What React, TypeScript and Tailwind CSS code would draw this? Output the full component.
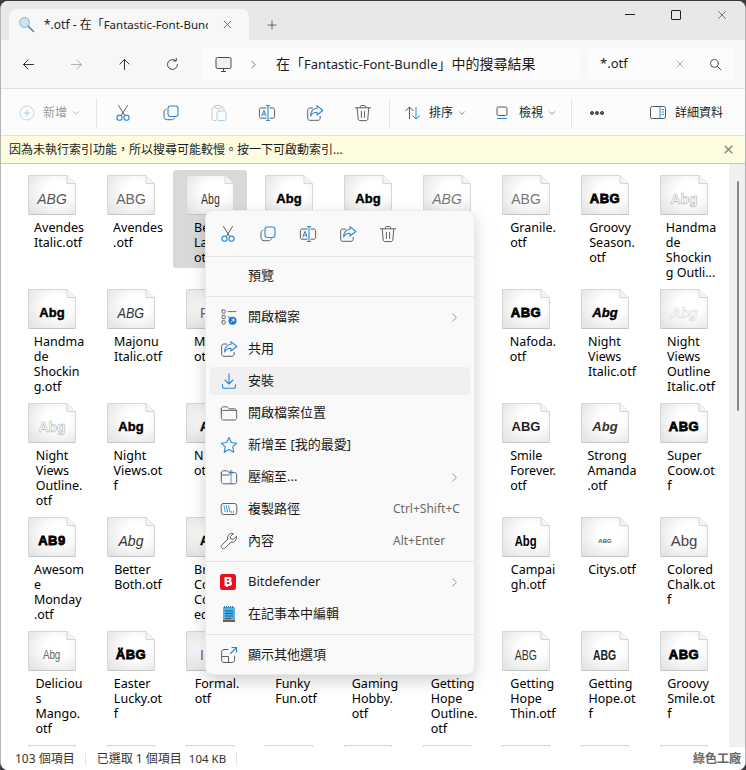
import type { ReactNode } from "react";
import { ChevronDown, ChevronRight, Plus, X } from "lucide-react";

const ui = "font-['Noto_Sans','Noto_Sans_CJK_TC',sans-serif]";

type FileItem = {
  sample?: string;
  sampleClass?: string;
  clipped?: boolean; // sample sits at the icon's left, the rest is under the menu
  lines?: string[];
  nameClass?: string;
  selected?: boolean;
};

const base = "font-['Liberation_Sans',sans-serif]";
const heavy = `${base} font-bold text-[13px] text-black [-webkit-text-stroke:0.4px_black]`;
const black = `${base} font-bold text-[13px] text-black tracking-[0.5px] [-webkit-text-stroke:0.8px_black]`;
const italicThin = `${base} italic text-[14px] text-[#555]`;
const italicLight = `${base} italic text-[14px] text-[#777]`;
const thin = `${base} text-[14px] text-[#666]`;
const ghost = `${base} font-bold text-[14px] text-white [-webkit-text-stroke:0.6px_#b5b5b5]`;
const ghostItalic = `${base} font-bold italic text-[14px] text-white [-webkit-text-stroke:0.5px_#cfcfcf]`;
const narrow = `${base} text-[14px] text-[#333] scale-x-75`;
const narrowBold = `${base} font-bold text-[14px] text-[#222] scale-x-75`;

const cut = "ml-[21px]";

const files: FileItem[] = [
  { sample: "ABG", sampleClass: italicThin, lines: ["Avendes", "Italic.otf"] },
  { sample: "ABG", sampleClass: thin, lines: ["Avendes", ".otf"] },
  { sample: "Abg", sampleClass: narrow, lines: ["Be", "La", "ot"], nameClass: cut, selected: true },
  { sample: "Abg", sampleClass: heavy },
  { sample: "Abg", sampleClass: heavy },
  { sample: "ABG", sampleClass: italicLight },
  { sample: "ABG", sampleClass: `${base} text-[14px] text-[#777]`, lines: ["Granile.", "otf"] },
  { sample: "ABG", sampleClass: black, lines: ["Groovy", "Season.", "otf"] },
  { sample: "Abg", sampleClass: ghost, lines: ["Handma", "de", "Shockin", "g Outli..."] },

  { sample: "Abg", sampleClass: heavy, lines: ["Handma", "de", "Shockin", "g.otf"] },
  { sample: "ABG", sampleClass: `${base} italic text-[14px] text-[#333] scale-x-90`, lines: ["Majonu", "Italic.otf"] },
  { sample: "P", sampleClass: thin, clipped: true, lines: ["M", "ot"], nameClass: cut },
  {},
  {},
  {},
  { sample: "ABG", sampleClass: black, lines: ["Nafoda.", "otf"] },
  { sample: "Abg", sampleClass: `${base} font-bold italic text-[13px] text-black [-webkit-text-stroke:0.4px_black]`, lines: ["Night", "Views", "Italic.otf"] },
  { sample: "Abg", sampleClass: ghostItalic, lines: ["Night", "Views", "Outline", "Italic.otf"] },

  { sample: "Abg", sampleClass: ghost, lines: ["Night", "Views", "Outline.", "otf"] },
  { sample: "Abg", sampleClass: heavy, lines: ["Night", "Views.ot", "f"] },
  { sample: "A", sampleClass: heavy, clipped: true, lines: ["N", "ot"], nameClass: cut },
  {},
  {},
  {},
  { sample: "ABG", sampleClass: `${base} font-bold text-[13px] text-[#222]`, lines: ["Smile", "Forever.", "otf"] },
  { sample: "Abg", sampleClass: `${base} font-bold italic text-[13px] text-[#333]`, lines: ["Strong", "Amanda", ".otf"] },
  { sample: "ABG", sampleClass: black, lines: ["Super", "Coow.ot", "f"] },

  { sample: "AB9", sampleClass: black, lines: ["Awesom", "e", "Monday", ".otf"] },
  { sample: "Abg", sampleClass: `${base} italic text-[14px] text-[#333]`, lines: ["Better", "Both.otf"] },
  { sample: "A", sampleClass: heavy, clipped: true, lines: ["Br", "Co", "Co", "ed"], nameClass: cut },
  {},
  {},
  {},
  { sample: "Abg", sampleClass: `${base} font-bold text-[15px] text-black scale-x-75`, lines: ["Campai", "gh.otf"] },
  { sample: "ABG", sampleClass: `${base} font-bold text-[6px] text-[#555]`, lines: ["Citys.otf"] },
  { sample: "Abg", sampleClass: `${base} text-[15px] text-[#444]`, lines: ["Colored", "Chalk.ot", "f"] },

  { sample: "Abg", sampleClass: `${base} text-[13px] text-[#666] scale-x-75`, lines: ["Deliciou", "s", "Mango.", "otf"] },
  { sample: "ÄBG", sampleClass: black, lines: ["Easter", "Lucky.ot", "f"] },
  { sample: "I", sampleClass: thin, clipped: true, lines: ["Formal.", "otf"] },
  { lines: ["Funky", "Fun.otf"] },
  { lines: ["Gaming", "Hobby.", "otf"] },
  { lines: ["Getting", "Hope", "Outline.", "otf"] },
  { sample: "ABG", sampleClass: narrow, lines: ["Getting", "Hope", "Thin.otf"] },
  { sample: "ABG", sampleClass: narrowBold, lines: ["Getting", "Hope.ot", "f"] },
  { sample: "ABG", sampleClass: black, lines: ["Groovy", "Smile.ot", "f"] },
];

function PageShape() {
  return (
    <svg width="48" height="40" viewBox="0 0 48 40" className="absolute inset-0">
      <defs>
        <radialGradient id="page" cx="62%" cy="42%" r="75%">
          <stop offset="35%" stopColor="#ffffff" />
          <stop offset="100%" stopColor="#e4e4e4" />
        </radialGradient>
      </defs>
      <path d="M.5.5H39L47.5 8.500V39.500H.5Z" fill="url(#page)" stroke="#d6d6d6" />
      <path d="M39 .5V8.500H47.500" fill="#f4f4f4" stroke="#d6d6d6" />
      <path d="M1 39.500H47" stroke="#c4c4c4" />
    </svg>
  );
}

function FontFile({ item }: { item: FileItem }) {
  return (
    <div className={`rounded-[3px] pt-[5px] ${item.selected ? "h-[98px] bg-[#d9d9d9]" : "h-[114px]"}`}>
      <div className="relative mx-auto h-[40px] w-[48px]">
        <PageShape />
        {item.sample && (
          <div className={`relative flex h-full items-center pt-[7px] ${item.clipped ? "pl-[14px]" : "justify-center"}`}>
            <span className={`inline-block leading-none ${item.sampleClass}`}>{item.sample}</span>
          </div>
        )}
      </div>
      {item.lines && (
        <div className={`mt-[5px] w-fit text-[12.5px] leading-[15px] text-black ${item.nameClass ?? "mx-auto pl-[14px]"}`}>
          {item.lines.map((line, i) => (
            <div key={i} className="whitespace-nowrap">{line}</div>
          ))}
        </div>
      )}
    </div>
  );
}

const Svg = ({ children, size = 18, className = "" }: { children: ReactNode; size?: number; className?: string }) => (
  <svg width={size} height={size} viewBox="0 0 18 18" fill="none" strokeLinecap="round" strokeLinejoin="round" className={`shrink-0 ${className}`}>
    {children}
  </svg>
);

const gray = "#5f5f5f";
const blue = "#2b88d8";

const CutIcon = () => (
  <Svg>
    <path d="M4.500 1.500 10.400 11M13.500 1.500 7.600 11" stroke={gray} strokeWidth="1" />
    <circle cx="5.500" cy="13.700" r="2.600" stroke={blue} strokeWidth="1.100" />
    <circle cx="12.500" cy="13.700" r="2.600" stroke={blue} strokeWidth="1.100" />
  </Svg>
);
const CopyIcon = () => (
  <Svg>
    <rect x="6" y="2" width="10" height="10.500" rx="2.400" stroke={blue} strokeWidth="1.100" />
    <path d="M4 5.200c-1 .3-2 1.100-2 2.600v4.500c0 2 1.400 3.400 3.400 3.400h4.300c1.300 0 2.200-.7 2.600-1.800" stroke={gray} strokeWidth="1" />
  </Svg>
);
const PasteIcon = () => (
  <Svg>
    <path d="M5 3H3.600C2.700 3 2 3.700 2 4.600v10.200c0 .9.700 1.600 1.600 1.600H6" stroke="#c8c8c8" strokeWidth="1" />
    <path d="M11 3h1.600c.9 0 1.400.5 1.400 1.400V6" stroke="#c8c8c8" strokeWidth="1" />
    <rect x="5" y="1.500" width="6" height="3" rx="1" stroke="#c8c8c8" strokeWidth="1" />
    <rect x="7" y="7" width="9" height="9.500" rx="1.600" stroke="#a9d1ef" strokeWidth="1" />
  </Svg>
);
const RenameIcon = () => (
  <Svg>
    <path d="M8 4H3c-1 0-1.600.7-1.600 1.600v7c0 1 .7 1.600 1.600 1.600h5M12 4h3c1 0 1.600.7 1.600 1.600v7c0 1-.7 1.600-1.600 1.600h-3" stroke={gray} strokeWidth="1" />
    <path d="M10 1.500v15M8.400 1.500h3.200M8.400 16.500h3.200" stroke={blue} strokeWidth="1.100" />
    <path d="M3.800 12 6 6.300 8 12M4.500 10.200h3" stroke={blue} strokeWidth="1" />
  </Svg>
);
const ShareIcon = () => (
  <Svg>
    <path d="M6.500 4H3.800C2.600 4 1.700 4.900 1.700 6v8.300c0 1.100.9 2 2.100 2h8.300c1.200 0 2.100-.9 2.100-2v-2" stroke={gray} strokeWidth="1" />
    <path d="M11 1.600 16.800 6.500 11 11V8.300C8 8.300 6 9.400 4.600 12c.2-4.600 2.600-7.400 6.400-7.700Z" stroke={blue} strokeWidth="1.100" />
  </Svg>
);
const TrashIcon = () => (
  <Svg>
    <path d="M1.500 3.800h15M6.300 3.500V2.800C6.300 2 7 1.500 7.700 1.500h2.600c.7 0 1.400.5 1.400 1.300v.7M3.200 4l1 11c.1 1 .9 1.600 1.700 1.600h6.200c.9 0 1.600-.7 1.700-1.600l1-11M7.400 7.300v6.200M10.600 7.300v6.200" stroke={gray} strokeWidth="1" />
  </Svg>
);
const OpenWithIcon = () => (
  <Svg>
    <rect x="2" y="2" width="3.200" height="3.200" rx=".6" stroke={gray} strokeWidth=".9" />
    <rect x="2" y="7.400" width="3.200" height="3.200" rx=".6" stroke={gray} strokeWidth=".9" />
    <rect x="2" y="12.800" width="3.200" height="3.200" rx=".6" stroke={gray} strokeWidth=".9" />
    <path d="M8 3.600h8M8 9h1.500" stroke={gray} strokeWidth=".9" />
    <circle cx="12.500" cy="12.700" r="4" fill="#0f78d4" />
    <path d="M11 14.200 14 11.300M12 11.200h2v2" stroke="white" strokeWidth=".9" />
  </Svg>
);
const InstallIcon = () => (
  <Svg>
    <path d="M9 1.800v10M5 8l4 4 4-4" stroke={blue} strokeWidth="1.100" />
    <path d="M2.500 12.500v1.700c0 1.300 1 2.100 2.100 2.100h8.800c1.100 0 2.100-.8 2.100-2.100v-1.700" stroke={blue} strokeWidth="1.100" />
  </Svg>
);
const FolderIcon = () => (
  <Svg>
    <path d="M1.300 5c0-1.200.9-2.200 2.200-2.200h3c.6 0 1 .2 1.400.6l1.300 1.400h5.400c1.200 0 2.100 1 2.100 2.200v6.800c0 1.200-.9 2.200-2.100 2.200H3.500c-1.300 0-2.200-1-2.200-2.200V5Z" stroke={gray} strokeWidth="1" />
    <path d="M1.300 8.300c0-1 .8-1.900 1.900-1.900h12.500" stroke={gray} strokeWidth="1" />
  </Svg>
);
const StarIcon = () => (
  <Svg>
    <path d="M9 1.500 11.300 6.500l5.400.7-4 3.700 1.100 5.400L9 13.600l-4.800 2.700 1.100-5.400-4-3.700 5.400-.7L9 1.500Z" stroke={blue} strokeWidth="1.100" />
  </Svg>
);
const ZipIcon = () => (
  <Svg>
    <path d="M1.300 5c0-1.200.9-2.200 2.200-2.200h3c.6 0 1 .2 1.400.6l1.300 1.200h5.400c1.200 0 2.100 1 2.100 2.200v6.800c0 1.200-.9 2.200-2.100 2.200H3.500c-1.300 0-2.200-1-2.200-2.200V5Z" stroke={gray} strokeWidth="1" />
    <path d="M1.500 7h7.500" stroke={gray} strokeWidth="1" />
    <path d="M11 6v10" stroke={blue} strokeWidth="1" strokeDasharray="1.500 1.200" />
    <rect x="9.800" y="3" width="2.400" height="3.200" rx=".8" stroke={blue} strokeWidth=".9" />
  </Svg>
);
const PathIcon = () => (
  <Svg>
    <rect x="1.200" y="3.500" width="15.600" height="11" rx="2.200" stroke={gray} strokeWidth="1" />
    <path d="M4 5.800l1.300 6M6.300 5.800l1.300 6M8.600 5.800l1.300 6" stroke={blue} strokeWidth=".9" />
    <path d="M11.500 12h.01M13.500 12h.01" stroke={gray} strokeWidth="1.300" />
  </Svg>
);
const WrenchIcon = () => (
  <Svg>
    <path d="M16.400 4.500 13.200 7.400l-2.400-.5-.6-2.300L13.400 1.700c-2.400-.9-5.200.6-5.700 3.100-.2.800-.1 1.600.1 2.300L1.900 13c-.9.900-.9 2.200 0 3.100.9.900 2.200.9 3.100 0l6-6c3 .8 6.200-1.900 5.400-5.600Z" stroke={gray} strokeWidth="1" />
  </Svg>
);
const BitdefenderIcon = () => (
  <svg width="16" height="16" viewBox="0 0 16 16" className="shrink-0">
    <rect width="16" height="16" rx="2.500" fill="#ee0c1e" />
    <path d="M4.500 3h5c1.300 0 2.100.8 2.100 2 0 .9-.3 1.500-1 1.900.9.300 1.400 1 1.400 2.100 0 1.700-1 3-2.500 3H8v1H6v-1H4.500V3Zm2.400 2.100v1.400h1.700c.4 0 .6-.3.6-.7s-.2-.7-.6-.7H6.900Zm0 3.200v1.700h1.900c.5 0 .7-.4.7-.9s-.2-.8-.7-.8H6.900Z" fill="white" fillRule="evenodd" />
  </svg>
);
const NotepadIcon = () => (
  <svg width="18" height="18" viewBox="0 0 18 18" className="shrink-0">
    <rect x="3" y="2" width="12" height="15" rx=".8" fill="#4fb3e8" />
    <rect x="3" y="15" width="12" height="2" fill="#8a5a2b" />
    <path d="M4.500 1v2M6.500 1v2M8.500 1v2M10.500 1v2M12.500 1v2" stroke="#1f6f9f" strokeWidth=".9" />
    <path d="M5 6h8M5 8.500h8M5 11h8M5 13.500h6" stroke="#155a85" strokeWidth=".9" />
  </svg>
);
const MoreOptionsIcon = () => (
  <Svg>
    <path d="M8 3.500H4c-1.400 0-2.400 1-2.400 2.400v8.200c0 1.400 1 2.400 2.400 2.400h8.200c1.400 0 2.400-1 2.400-2.400v-4" stroke={gray} strokeWidth="1" />
    <path d="M1.800 10.500h6.700v6" stroke={gray} strokeWidth="1" />
    <path d="M10.500 7.500l6-6M12 1.500h4.500V6" stroke={blue} strokeWidth="1.100" />
  </Svg>
);

function MenuRow({ icon, label, right, arrow, active }: { icon?: ReactNode; label: string; right?: string; arrow?: boolean; active?: boolean }) {
  return (
    <div className="h-[32px] px-[4px] py-[2px]">
      <div className={`flex h-[28px] items-center rounded-[4px] pl-[10px] pr-[8px] ${active ? "bg-[#f0f0f0]" : ""}`}>
        <div className="flex w-[28px] items-center">{icon}</div>
        <span className="flex-1 text-[13px] text-[#1b1b1b]">{label}</span>
        {right && <span className="mr-[2px] w-[67px] whitespace-nowrap text-[12px] text-[#6a6a6a]">{right}</span>}
        {arrow && <ChevronRight size={15} strokeWidth={1.2} className="text-[#777]" />}
      </div>
    </div>
  );
}

const Divider = () => <div className="h-px bg-[#e6e6e6]" />;

function ContextMenu() {
  return (
    <div className="absolute left-[205px] top-[210px] z-10 w-[270px] rounded-[8px] border border-[#ebebeb] bg-[#f9f9f9] shadow-[0_6px_16px_rgba(0,0,0,0.18)]">
      <div className="flex h-[45px] items-center gap-[22px] pl-[13px]">
        <CutIcon />
        <CopyIcon />
        <RenameIcon />
        <ShareIcon />
        <TrashIcon />
      </div>
      <Divider />
      <div className="pb-[4px] pt-[3px]">
        <MenuRow label="預覽" />
      </div>
      <Divider />
      <div className="py-[4px]">
        <MenuRow icon={<OpenWithIcon />} label="開啟檔案" arrow />
        <MenuRow icon={<ShareIcon />} label="共用" />
        <MenuRow icon={<InstallIcon />} label="安裝" active />
        <MenuRow icon={<FolderIcon />} label="開啟檔案位置" />
        <MenuRow icon={<StarIcon />} label="新增至 [我的最愛]" />
        <MenuRow icon={<ZipIcon />} label="壓縮至..." arrow />
        <MenuRow icon={<PathIcon />} label="複製路徑" right="Ctrl+Shift+C" />
        <MenuRow icon={<WrenchIcon />} label="內容" right="Alt+Enter" />
      </div>
      <Divider />
      <div className="py-[4px]">
        <MenuRow icon={<BitdefenderIcon />} label="Bitdefender" arrow />
        <MenuRow icon={<NotepadIcon />} label="在記事本中編輯" />
      </div>
      <Divider />
      <div className="pb-[3px] pt-[4px]">
        <MenuRow icon={<MoreOptionsIcon />} label="顯示其他選項" />
      </div>
    </div>
  );
}

function TitleBar() {
  return (
    <div className="flex h-[39px] items-end bg-[#e8e8e8] pl-[8px]">
      <div className="flex h-[31px] w-[240px] items-center rounded-t-[8px] bg-[#f7f7f7] pl-[9px] pr-[15px]">
        <svg width="17" height="17" viewBox="0 0 17 17" className="shrink-0">
          <circle cx="6.500" cy="6.500" r="5" fill="#c9e4f6" stroke="#8fb4cc" />
          <path d="M10.500 10.500 15.500 15.500" stroke="#6f7f8a" strokeWidth="1.600" strokeLinecap="round" />
        </svg>
        <span className="ml-[9px] w-[164px] overflow-hidden whitespace-nowrap text-[12px] text-[#1b1b1b]">
          *.otf - 在「<span className="text-[11.5px]">Fantastic-Font-Bundle</span>」
        </span>
        <X size={13} strokeWidth={1.2} className="ml-auto text-[#333]" />
      </div>
      <Plus size={14} strokeWidth={1.2} className="mb-[8px] ml-[16px] text-[#333]" />
      <div className="mb-[12px] ml-auto flex items-center self-stretch">
        <div className="flex w-[46px] justify-center"><div className="h-px w-[10px] bg-[#222]" /></div>
        <div className="flex w-[46px] justify-center"><div className="h-[10px] w-[10px] rounded-[1px] border border-[#222]" /></div>
        <div className="flex w-[46px] justify-center"><X size={14} strokeWidth={1} className="text-[#222]" /></div>
      </div>
    </div>
  );
}

function AddressBar() {
  const Nav = ({ d, color }: { d: string; color: string }) => (
    <div className="flex w-[48px] justify-center">
      <Svg size={15}><path d={d} stroke={color} strokeWidth="1.200" /></Svg>
    </div>
  );
  return (
    <div className="flex h-[49px] items-center border-b border-[#dfdfdf] bg-[#f7f7f7] pl-[3px]">
      <Nav d="M15 9H3M8.500 3.500 3 9l5.500 5.500" color="#333" />
      <Nav d="M3 9h12M9.500 3.500 15 9l-5.500 5.500" color="#b0b0b0" />
      <Nav d="M9 15V3M3.500 8.500 9 3l5.500 5.500" color="#333" />
      <Nav d="M15 9a6 6 0 1 1-2-4.500M13.500 1.500v3.200h-3.200" color="#444" />
      <div className="ml-[6px] flex h-[32px] w-[378px] items-center rounded-[5px] bg-[#fcfcfc] pl-[13px]">
        <svg width="17" height="17" viewBox="0 0 17 17" fill="none" className="shrink-0">
          <rect x="1" y="1.500" width="15" height="11" rx="1.600" stroke="#4a4a4a" fill="#f0f0f0" />
          <path d="M6 15.500h5M8.500 12.500v3" stroke="#4a4a4a" />
        </svg>
        <ChevronRight size={13} strokeWidth={1.3} className="ml-[15px] text-[#444]" />
        <span className="ml-[16px] whitespace-nowrap text-[14px] text-[#1b1b1b]">
          在「<span className="text-[13px]">Fantastic-Font-Bundle</span>」中的搜尋結果
        </span>
      </div>
      <div className="ml-[8px] flex h-[32px] w-[146px] items-center rounded-[5px] bg-[#fcfcfc] pl-[12px]">
        <span className="w-[74px] text-[13px] text-[#1b1b1b]">*.otf</span>
        <X size={12} strokeWidth={1} className="text-[#555]" />
        <Svg size={13} className="ml-[23px]"><circle cx="7.500" cy="7.500" r="5.500" stroke="#444" strokeWidth="1.300" /><path d="M11.500 11.500 16.500 16.500" stroke="#444" strokeWidth="1.300" /></Svg>
      </div>
    </div>
  );
}

function Toolbar() {
  const Sep = () => <div className="h-[31px] w-px bg-[#e6e6e6]" />;
  const Btn = ({ children }: { children: ReactNode }) => <div className="flex w-[48px] justify-center">{children}</div>;
  return (
    <div className="flex h-[47px] items-center border-b border-[#dfdfdf] bg-[#fcfcfc] pt-[2px] text-[12px] text-[#1b1b1b]">
      <div className="flex w-[95px] items-center pl-[18px] text-[#9a9a9a]">
        <svg width="16" height="16" viewBox="0 0 16 16" fill="none" className="shrink-0">
          <circle cx="8" cy="8" r="7" stroke="#c3d4e2" />
          <path d="M8 4.800v6.400M4.800 8h6.400" stroke="#a9cbe6" />
        </svg>
        <span className="ml-[8px]">新增</span>
        <ChevronDown size={10} className="ml-[4px] text-[#aaa]" />
      </div>
      <Sep />
      <div className="w-[2px]" />
      <Btn><CutIcon /></Btn>
      <Btn><CopyIcon /></Btn>
      <Btn><PasteIcon /></Btn>
      <Btn><RenameIcon /></Btn>
      <Btn><ShareIcon /></Btn>
      <Btn><TrashIcon /></Btn>
      <div className="w-[2px]" />
      <Sep />
      <div className="flex w-[91px] items-center pl-[14px]">
        <svg width="18" height="18" viewBox="0 0 18 18" fill="none" className="shrink-0">
          <path d="M5.500 15V3M1.500 7 5.500 3l4 4" stroke="#555" />
          <path d="M12 3v12M8.500 11.500 12 15l4-3.500" stroke="#2b88d8" />
        </svg>
        <span className="ml-[7px]">排序</span>
        <ChevronDown size={10} className="ml-[4px] text-[#777]" />
      </div>
      <div className="flex w-[90px] items-center pl-[13px]">
        <svg width="16" height="16" viewBox="0 0 16 16" fill="none" className="shrink-0">
          <rect x="3" y="2" width="10" height="8.500" rx="1.500" stroke="#555" />
          <path d="M3 13.500h10" stroke="#2b88d8" />
        </svg>
        <span className="ml-[9px]">檢視</span>
        <ChevronDown size={10} className="ml-[4px] text-[#777]" />
      </div>
      <Sep />
      <div className="flex w-[50px] justify-center gap-[3px]">
        <div className="h-[2px] w-[2px] rounded-full bg-[#333] outline outline-[0.5px] outline-[#333]" />
        <div className="h-[2px] w-[2px] rounded-full bg-[#333] outline outline-[0.5px] outline-[#333]" />
        <div className="h-[2px] w-[2px] rounded-full bg-[#333] outline outline-[0.5px] outline-[#333]" />
      </div>
      <div className="ml-[28px] flex items-center">
        <svg width="16" height="14" viewBox="0 0 16 14" fill="none" className="shrink-0">
          <rect x=".5" y=".5" width="15" height="12" rx="2" stroke="#555" />
          <path d="M10 .5v12" stroke="#2b88d8" />
          <path d="M11.500 3.500h2.500M11.500 6h2.500M11.500 8.500h2.500" stroke="#2b88d8" />
        </svg>
        <span className="ml-[9px]">詳細資料</span>
      </div>
    </div>
  );
}

export default function App() {
  return (
    <div lang="zh-TW" className={`relative h-[770px] w-[746px] overflow-hidden bg-[#3f3a42] ${ui}`}>
      <div className="mt-px flex h-[769px] flex-col overflow-hidden rounded-[8px] border-l border-r border-[#b5b5b5] bg-white">
        <TitleBar />
        <AddressBar />
        <Toolbar />
        <div className="flex h-[28px] items-center border-b border-[#c6c6c6] bg-[#fdfcdf] pl-[8px] pr-[10px] text-[12px] text-[#1b1b1b]">
          <span>因為未執行索引功能，所以搜尋可能較慢。按一下可啟動索引...</span>
          <X size={13} strokeWidth={3} className="ml-auto text-[#8a8a8a]" />
        </div>
        <div className="relative flex h-[583px] overflow-hidden">
          <div className="grid flex-1 grid-cols-[repeat(9,74px)] content-start gap-x-[5px] pl-[14px] pt-[6px]">
            {files.map((f, i) => <FontFile key={i} item={f} />)}
            {Array.from({ length: 9 }).map((_, i) => (
              <div key={i} className="pt-[5px]"><div className="mx-auto h-[39px] w-[48px] border border-[#d4d4d4]" /></div>
            ))}
          </div>
          <div className="absolute inset-y-0 right-0 w-[16px] bg-[#f0f0f0]">
            <div className="ml-[8px] mt-[17px] h-[230px] w-[2px] rounded-full bg-[#8a8a8a]" />
          </div>
        </div>
        <div className="relative z-[1] flex h-[23px] items-center bg-white pl-[14px] text-[12px] text-[#333]">
          <span>103 個項目</span>
          <div className="ml-[10px] h-[14px] w-px bg-[#e6e6e6]" />
          <span className="ml-[11px]">已選取 1 個項目</span>
          <span className="ml-[7px] text-[11.5px]">104 KB</span>
          <div className="ml-[10px] h-[14px] w-px bg-[#e6e6e6]" />
        </div>
      </div>
      <ContextMenu />
      <div className="absolute bottom-[5px] left-[693px] z-10 text-[12px] font-bold leading-[13px] text-[#666] [text-shadow:1px_0_0_#fff,-1px_0_0_#fff,0_1px_0_#fff,0_-1px_0_#fff]">綠色工廠</div>
    </div>
  );
}
